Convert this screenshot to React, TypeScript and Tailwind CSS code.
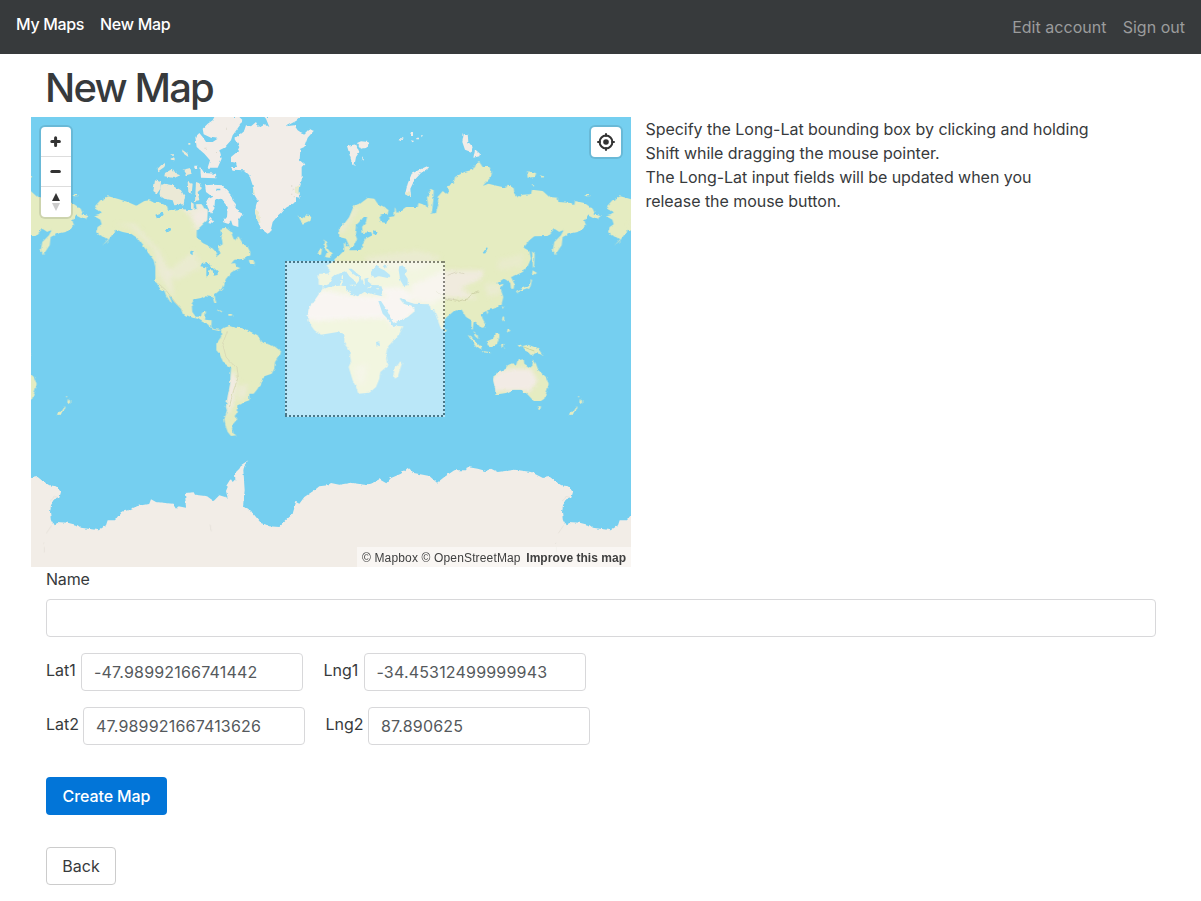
import React from "react";

const EURASIA_AFRICA =
  "M885,447 L905,435 L912,425 L925,415 L935,405 L940,402 L938,375 L943,376 L945,388 L958,388 L955,400 L975,400 L990,398 L995,380 L1003,365 L1025,355 L1020,345 L995,348 L993,330 L1005,315 L1008,300 L995,300 L985,315 L975,325 L972,350 L978,365 L968,388 L955,388 L945,365 L925,360 L924,335 L940,320 L955,300 L965,275 L970,265 L985,262 L1010,243 L1030,245 L1040,260 L1060,270 L1073,280 L1070,290 L1050,292 L1045,300 L1050,315 L1065,318 L1075,300 L1090,298 L1092,270 L1097,288 L1118,275 L1125,270 L1160,270 L1163,258 L1175,262 L1192,272 L1188,240 L1198,215 L1208,220 L1207,250 L1202,290 L1215,288 L1222,260 L1220,240 L1235,222 L1245,230 L1252,225 L1247,205 L1268,200 L1272,180 L1300,165 L1325,158 L1335,140 L1345,135 L1355,150 L1375,150 L1383,165 L1380,180 L1355,207 L1372,200 L1400,207 L1425,212 L1430,203 L1447,207 L1450,230 L1462,242 L1470,233 L1500,232 L1503,218 L1535,222 L1555,240 L1580,242 L1582,255 L1620,258 L1630,265 L1632,252 L1660,258 L1685,275 L1692,290 L1708,294 L1700,308 L1690,305 L1670,295 L1660,310 L1665,325 L1640,345 L1615,350 L1595,360 L1592,385 L1572,415 L1565,400 L1570,375 L1590,355 L1600,335 L1585,345 L1570,335 L1550,357 L1510,358 L1495,370 L1478,392 L1495,402 L1500,425 L1490,448 L1475,465 L1455,475 L1440,480 L1450,500 L1448,515 L1440,515 L1438,498 L1425,488 L1418,485 L1400,497 L1403,505 L1418,500 L1408,515 L1417,540 L1412,560 L1400,570 L1370,580 L1350,590 L1355,605 L1363,620 L1362,630 L1350,633 L1340,622 L1328,615 L1325,638 L1321,636 L1321,610 L1305,600 L1292,578 L1275,577 L1262,588 L1245,602 L1240,612 L1236,638 L1230,636 L1213,590 L1210,580 L1200,578 L1195,562 L1150,560 L1125,552 L1110,542 L1105,545 L1120,563 L1135,565 L1150,575 L1150,583 L1130,600 L1085,618 L1100,627 L1117,628 L1105,650 L1070,690 L1065,710 L1072,745 L1048,765 L1045,785 L1035,810 L1015,827 L982,830 L975,810 L965,790 L953,750 L960,735 L955,700 L940,680 L940,655 L920,645 L870,653 L850,640 L830,612 L833,575 L855,545 L865,530 L875,515 L875,505 L863,503 L863,470 L890,470 L897,460Z";

const NORTH_AMERICA =
  "M190,298 L205,294 L212,285 L202,282 L192,268 L208,250 L232,238 L262,246 L290,255 L316,266 L340,252 L355,250 L370,258 L385,256 L408,268 L412,280 L450,276 L480,280 L498,276 L495,262 L512,262 L520,275 L530,280 L528,310 L497,340 L497,360 L515,378 L540,390 L552,402 L558,418 L565,412 L562,390 L575,382 L572,360 L568,335 L585,333 L600,345 L610,372 L622,358 L636,380 L650,390 L658,405 L658,415 L640,425 L610,428 L600,440 L612,438 L618,450 L628,453 L602,465 L585,485 L572,515 L550,533 L556,558 L550,558 L545,540 L520,538 L510,543 L490,547 L482,560 L484,585 L495,600 L510,597 L513,587 L525,583 L522,608 L542,610 L541,630 L548,637 L568,638 L565,642 L545,638 L530,622 L515,615 L500,605 L485,602 L455,590 L450,575 L430,555 L420,540 L413,533 L422,555 L418,555 L405,535 L400,522 L385,512 L373,490 L373,450 L368,430 L345,398 L330,378 L318,362 L300,350 L275,345 L255,338 L245,352 L232,370 L213,387 L232,366 L205,355 L195,345 L200,330 L212,322 L208,308Z";

const SOUTH_AMERICA =
  "M570,640 L580,632 L595,627 L612,632 L635,633 L660,645 L680,655 L690,675 L730,688 L750,703 L748,712 L732,735 L730,755 L722,770 L700,778 L690,795 L680,815 L668,830 L655,830 L655,850 L640,855 L630,862 L622,865 L620,885 L611,897 L617,908 L607,920 L603,935 L608,950 L617,955 L600,957 L590,945 L583,925 L580,905 L588,880 L585,870 L590,840 L598,800 L600,752 L578,738 L565,710 L556,700 L556,680 L570,660Z";

const AUSTRALIA =
  "M1388,775 L1405,765 L1418,762 L1430,745 L1445,738 L1455,745 L1460,730 L1478,727 L1480,740 L1498,752 L1505,745 L1506,727 L1515,740 L1522,760 L1545,780 L1553,800 L1550,815 L1540,845 L1530,852 L1508,852 L1492,835 L1485,828 L1478,828 L1470,818 L1445,818 L1425,828 L1400,832 L1393,830 L1393,815 L1387,790Z M1521,868 h9 l-2,10 h-6Z";

const ISLANDS = [
  "M654,428 L665,430 L672,442 L655,440Z",
  "M800,295 L812,305 L825,295 L840,300 L835,312 L815,320 L808,312Z",
  "M879,367 L885,375 L890,395 L902,410 L898,422 L882,420 L888,405 L878,390Z",
  "M865,393 L873,397 L870,413 L860,414Z",
  "M1108,733 L1113,738 L1100,780 L1092,785 L1087,770 L1092,750 L1100,745Z",
  "M1488,163 L1515,168 L1513,180 L1490,182Z M1527,174 L1540,180 L1530,182Z M1665,234 h12 v4 h-12Z M1503,202 h7 v3 h-7Z",
  "M1503,403 L1511,410 L1510,445 L1506,450Z",
  "M1500,485 L1503,490 L1498,510 L1480,517 L1462,522 L1460,530 L1455,522 L1475,513 L1490,508 L1498,495Z M1505,460 L1518,468 L1508,475 L1503,470Z",
  "M1413,568 l5,2 l-3,7Z M1415,598 L1420,605 L1418,615 L1413,608Z M1430,635 L1438,640 L1435,648 L1428,645Z M1366,580 l6,5 l-3,8Z",
  "M1310,653 L1325,662 L1340,680 L1352,692 L1350,700 L1335,690 L1322,672Z M1353,702 L1382,706 L1382,709 L1355,706Z",
  "M1368,673 L1385,665 L1395,650 L1405,650 L1405,660 L1398,680 L1385,690 L1370,685Z M1328,642 L1340,655 L1342,667 L1332,658Z M1410,682 L1418,680 L1415,688 L1422,695 L1412,692Z",
  "M1460,680 L1472,685 L1470,690 L1462,688Z M1475,687 L1490,683 L1510,690 L1525,700 L1537,717 L1528,712 L1515,708 L1500,715 L1490,705 L1480,700Z",
  "M1647,846 L1658,855 L1650,862 L1645,856Z M1636,868 L1640,872 L1630,885 L1622,897 L1614,896 L1616,888 L1628,880Z M1641,838 h4 v3 h-4Z",
  "M1241,635 l6,5 l-3,6 l-4,-3Z",
  "M555,575 L572,582 L575,587 L564,581Z M592,591 h11 v5 h-11Z",
];

const GREEN_LAND = [EURASIA_AFRICA, NORTH_AMERICA, SOUTH_AMERICA, AUSTRALIA, ...ISLANDS].join(" ");

const ARCTIC = [
  "M610,65 L640,40 L645,25 L660,28 L675,15 L683,30 L700,20 L715,30 L705,5 L700,0 L810,0 L795,12 L765,28 L790,25 L800,40 L808,45 L820,50 L835,35 L848,42 L830,62 L820,90 L808,95 L806,130 L820,142 L812,150 L812,190 L805,205 L800,215 L806,242 L795,240 L795,255 L765,272 L750,290 L735,303 L725,315 L718,345 L710,350 L690,335 L682,315 L672,285 L675,265 L680,250 L668,230 L665,205 L655,175 L640,160 L605,158 L600,150 L618,150 L615,138 L600,135 L600,120 L618,105 L625,90Z",
  "M550,0 L625,0 L635,10 L630,20 L605,55 L600,70 L580,92 L565,100 L572,125 L560,152 L530,152 L537,130 L520,110 L497,90 L493,60 L505,48 L515,60 L525,75 L545,75 L560,65 L540,62 L518,52 L515,35 L530,20 L545,10Z",
  "M948,87 L975,82 L985,105 L975,120 L970,147 L962,135 L955,110Z M978,78 L990,73 L1013,75 L1010,92 L990,95Z M990,118 L1000,130 L992,130Z",
  "M1102,72 L1118,58 L1115,67Z M1140,45 h6 v12 h-10Z M1140,70 l10,2 l-6,4Z M1156,62 h8 v5 h-8Z M1170,55 l6,0 l-4,6Z",
  "M1190,147 L1194,152 L1170,168 L1150,190 L1138,215 L1140,240 L1122,232 L1130,200 L1142,170 L1165,158Z",
  "M1298,52 L1310,50 L1312,75 L1325,90 L1320,105 L1302,98 L1294,75Z M1332,97 L1347,110 L1345,118 L1327,122Z",
  "M522,205 L545,203 L575,205 L600,235 L605,250 L615,262 L612,278 L635,290 L622,310 L622,330 L605,325 L600,310 L590,320 L575,315 L588,300 L590,270 L570,245 L552,248 L550,275 L540,290 L530,270 L525,250 L545,240 L525,225Z",
  "M508,150 L520,168 L555,170 L556,184 L510,182Z M490,146 h10 v8 h-10Z",
  "M536,300 L550,318 L536,316Z",
].join(" ");

const TUNDRA = [
  "M452,97 L470,110 L472,120 L460,112Z M418,128 L428,122 L432,130Z M380,155 L390,145 L405,137 L400,150 L382,163Z",
  "M402,168 L425,155 L435,170 L448,175 L430,183 L400,178Z M455,158 L478,153 L482,170 L465,175Z",
  "M372,190 L390,195 L388,215 L378,230 L367,222Z M390,205 L400,200 L425,205 L450,220 L462,240 L458,262 L430,265 L425,250 L400,245 L385,235Z",
  "M470,195 L485,200 L482,230 L472,225Z M495,195 L510,200 L512,215 L500,225 L505,250 L492,252Z M480,255 L488,260 L488,280 L480,275Z M419,112 h10 v4 h-10Z M472,78 h6 v5 h-6Z",
].join(" ");

const ANTARCTICA =
  "M0,1083 L20,1080 L35,1092 L55,1105 L75,1108 L90,1125 L85,1142 L70,1148 L60,1165 L57,1185 L60,1210 L68,1225 L75,1222 L77,1215 L110,1217 L140,1225 L150,1232 L203,1240 L225,1225 L230,1210 L252,1210 L270,1185 L290,1180 L320,1167 L355,1160 L360,1147 L375,1155 L425,1160 L435,1175 L442,1168 L465,1172 L462,1128 L488,1126 L492,1133 L528,1138 L548,1152 L565,1135 L590,1142 L585,1122 L590,1110 L585,1108 L598,1087 L605,1098 L613,1090 L612,1068 L625,1055 L632,1043 L652,1030 L640,1045 L637,1060 L641,1120 L636,1168 L665,1188 L690,1218 L715,1228 L745,1230 L760,1215 L785,1190 L795,1155 L805,1160 L820,1140 L850,1120 L865,1108 L890,1105 L900,1098 L925,1103 L960,1097 L1000,1103 L1020,1100 L1045,1087 L1066,1099 L1080,1083 L1110,1070 L1130,1053 L1145,1067 L1195,1077 L1218,1097 L1240,1080 L1270,1060 L1305,1060 L1310,1050 L1340,1055 L1365,1062 L1380,1055 L1400,1065 L1450,1058 L1500,1065 L1536,1083 L1556,1080 L1571,1092 L1580,1100 V1380 H-60 V1060Z";

const INLAND_WATER = [
  "M874,509 L893,502 L903,483 L915,473 L932,467 L945,463 L955,478 L968,488 L976,498 L983,490 L985,484 L968,472 L952,455 L962,455 L985,475 L997,500 L1002,500 L1000,485 L1012,482 L1015,497 L1025,504 L1050,505 L1055,520 L1050,537 L1020,530 L1000,525 L980,538 L962,530 L945,520 L945,507 L925,506 L895,509 L880,515Z",
  "M1020,478 L1020,465 L1030,450 L1035,446 L1050,455 L1060,460 L1078,475 L1070,483 L1045,478 L1030,482Z M1055,447 L1067,443 L1062,455Z",
  "M1103,460 L1105,448 L1118,445 L1128,460 L1120,470 L1130,485 L1130,505 L1118,507 L1108,490Z",
  "M1042,552 L1050,552 L1068,580 L1083,612 L1088,618 L1102,626 L1087,630 L1077,612 L1055,590Z",
  "M1035,675 l10,-2 l2,10 l-10,6Z M1355,408 L1368,390 L1370,395 L1360,410Z",
  "M526,450 L545,450 L560,463 L560,474 L548,476 L545,460 L535,460 L533,478 L526,478Z M508,448 L513,438 L528,435 L540,448 L533,452Z",
  "M373,293 L395,285 L398,293 L385,305 L378,305Z M402,340 L418,334 L420,340 L408,347Z M477,400 L485,403 L485,415 L478,410Z M556,215 h12 v5 h-12Z",
  "M1026,340 l14,4 l-4,9 l-9,-2Z",
].join(" ");

const World = () => (
  <svg viewBox="0 0 1800 1350" className="block h-[450px] w-[600px]">
    <defs>
      <filter id="coast" x="0" y="0" width="1850" height="1350" filterUnits="userSpaceOnUse">
        <feTurbulence type="fractalNoise" baseFrequency="0.07" numOctaves="2" seed="4" />
        <feDisplacementMap in="SourceGraphic" scale="9" xChannelSelector="R" yChannelSelector="G" />
      </filter>
      <filter id="soft" x="0" y="0" width="1850" height="1350" filterUnits="userSpaceOnUse">
        <feGaussianBlur stdDeviation="7" />
      </filter>
      <clipPath id="land">
        <path d={GREEN_LAND} />
      </clipPath>
      <g id="world">
        <g filter="url(#coast)">
          <path d={GREEN_LAND} fill="#e5ecc1" />
          <g clipPath="url(#land)">
            <g filter="url(#soft)" fill="#f2ebe5">
              <path d="M815,607 L830,540 L880,520 L960,535 L1060,540 L1110,550 L1170,570 L1130,605 L1085,630 L1065,604 L960,605 L860,612Z" />
              <path d="M1045,515 L1100,510 L1130,520 L1150,550 L1090,560Z" />
              <path d="M1140,505 L1240,460 L1360,460 L1350,485 L1290,515 L1340,545 L1240,540 L1200,560 L1140,550Z" opacity=".8" />
              <path d="M1380,785 L1405,762 L1440,755 L1500,755 L1520,790 L1500,822 L1380,822Z" />
              <path d="M415,230 L520,250 L600,330 L500,320 L470,290Z" opacity=".7" />
              <path d="M520,270 L560,290 L520,330 L495,345 L480,300Z" opacity=".7" />
              <path d="M250,322 L300,330 L370,400 L380,470 L430,545 L420,470 L385,400 L310,320Z" opacity=".5" />
              <path d="M400,470 L490,400 L510,450 L440,490Z" opacity=".4" />
              <path d="M600,760 L618,780 L608,850 L590,900 L585,850Z" />
              <path d="M620,810 L650,800 L645,840 L620,850Z" opacity=".5" />
              <path d="M970,750 L1010,740 L1000,800 L975,800Z" opacity=".4" />
              <path d="M1000,420 L1160,400 L1230,420 L1160,460 L1020,450Z" opacity=".4" />
              <path d="M1400,430 L1480,410 L1470,450 L1400,460Z" opacity=".3" />
              <path d="M1360,500 L1410,500 L1410,530 L1370,540Z" opacity=".4" />
              <path d="M1700,270 h30 v30 h-30Z M920,340 L975,270 L980,280 L935,350Z" opacity=".5" />
            </g>
            <g fill="none" strokeWidth="3">
              <path d="M1230,532 L1250,548 L1280,553 L1310,545 L1325,530 L1345,525" stroke="#cfd3a8" />
              <path d="M1215,520 L1240,542 L1275,549" stroke="#dcd9c2" />
              <path d="M590,640 L575,680 L585,720 L603,740 L618,752 L622,780 L608,820 L595,870" stroke="#dadbb7" />
              <path d="M383,500 L405,520 L440,565 L455,582" stroke="#d6d9b5" />
              <path d="M1250,475 L1275,465 L1300,470" stroke="#ddd9c4" />
              <path d="M1478,690 L1510,702" stroke="#cbd5a0" />
            </g>
          </g>
          <path d={TUNDRA} fill="#ebe9d6" />
          <path d={ARCTIC} fill="#f2ede8" />
          <path d="M672,275 l12,10 l4,30 l-8,-2 l-8,-25Z M795,210 l10,-5 l-4,30 l-6,-8Z M1122,225 l14,2 l4,12 l-14,-5Z M665,206 l6,20 l2,8 l-6,-6Z" fill="#e7eacb" />
          <path d="M780,205 h4 v4 h-4Z M785,215 h5 v3 h-5Z M778,230 h6 v3 h-6Z M788,238 h4 v3 h-4Z M520,95 h8 v3 h-8Z M552,105 h6 v3 h-6Z M585,35 h6 v3 h-6Z" fill="#dedace" />
          <path d={INLAND_WATER} fill="#75cff0" />
          <path d="M928,490 h7 v13 h-7Z M932,478 h4 v8 h-4Z M958,503 h14 l-3,6Z M1010,511 h12 v2 h-12Z M1036,514 h8 v3 h-8Z" fill="#e5ecc1" />
          <path d={ANTARCTICA} fill="#f2ede7" />
        </g>
        <g fill="none" stroke="#e8e3dc" strokeWidth="3">
          <path d="M57,1152 l8,-6 l4,-8 l10,3 M62,1225 l-8,12 l-8,12 M40,1278 l-4,2 M40,1290 v16 M535,1225 h4 v15 h5" />
        </g>
      </g>
    </defs>
    <rect width="1800" height="1350" fill="#75cff0" />
    <svg x="0" y="0" width="200" height="1000" viewBox="1536 0 200 1000">
      <use href="#world" />
    </svg>
    <use href="#world" />
    <use href="#world" x="1536" />
  </svg>
);

const Field = ({ label, value, labelClass }: { label: string; value: string; labelClass: string }) => (
  <div className="flex items-start">
    <label className={`pt-[5px] whitespace-nowrap ${labelClass}`}>{label}</label>
    <div className="flex h-[38px] w-[222px] items-center rounded border border-[#d8d8da] px-3 tracking-[0.18px] text-[#55595c]">
      {value}
    </div>
  </div>
);

export default function App() {
  return (
    <div className="h-[901px] w-[1201px] overflow-hidden bg-white font-['Inter',sans-serif] text-base leading-6 text-[#373a3c]">
      <nav className="flex h-[54px] justify-between bg-[#373a3c] px-4">
        <div className="flex gap-4 pt-3 font-medium text-white">
          <a className="w-[68px] tracking-[-0.32px] whitespace-nowrap">My Maps</a>
          <a className="tracking-[-0.28px] whitespace-nowrap">New Map</a>
        </div>
        <div className="flex gap-4 pt-[15px] text-[#9b9c9d]">
          <a className="tracking-[0.04px]">Edit account</a>
          <a className="tracking-[0.02px]">Sign out</a>
        </div>
      </nav>

      <main className="pl-[31px]">
        <h1 className="h-[63px] pt-[12px] pl-[14px] text-[40px] leading-[44px] font-medium tracking-[-1.85px]">New Map</h1>

        <div className="flex">
          <div className="relative h-[450px] w-[600px] overflow-hidden">
            <World />
            <svg className="absolute top-[144px] left-[254px] h-[156px] w-[160px] opacity-50" viewBox="0 0 160 156" shapeRendering="crispEdges">
              <rect width="160" height="156" fill="#fff" />
              <path d="M0,1 H160 M0,155 H160 M1,0 V156 M159,0 V156" stroke="#202020" strokeWidth="2" strokeDasharray="2 2" />
            </svg>

            <div className="absolute top-[10px] left-[10px] w-[30px] divide-y divide-[#ddd] rounded bg-white shadow-[0_0_0_2px_rgba(0,0,0,0.1)]">
              <div className="flex h-[30px] items-center justify-center">
                <svg viewBox="0 0 20 20" className="h-5 w-5">
                  <path d="M9.6,5.7 V13.4 M5.8,9.5 H13.4" stroke="#333" strokeWidth="3" strokeLinecap="round" />
                </svg>
              </div>
              <div className="flex h-[30px] items-center justify-center">
                <svg viewBox="0 0 20 20" className="h-5 w-5">
                  <path d="M5.8,9.5 H13.4" stroke="#333" strokeWidth="3" strokeLinecap="round" />
                </svg>
              </div>
              <div className="flex h-[30px] items-center justify-center">
                <svg viewBox="0 0 20 20" className="h-5 w-5">
                  <path d="M6,9 L10,1 L14,9Z" fill="#333" />
                  <path d="M6,11 L10,19 L14,11Z" fill="#ccc" />
                </svg>
              </div>
            </div>

            <div className="absolute top-[10px] right-[10px] flex h-[30px] w-[30px] items-center justify-center rounded bg-white shadow-[0_0_0_2px_rgba(0,0,0,0.1)]">
              <svg viewBox="0 0 20 20" className="h-5 w-5" fill="none" stroke="#333" strokeWidth="2">
                <circle cx="10" cy="10" r="6.4" />
                <circle cx="10" cy="10" r="2.8" fill="#333" stroke="none" />
                <path d="M10,2 V4 M10,16 V18 M2,10 H4 M16,10 H18" strokeLinecap="round" />
              </svg>
            </div>

            <div className="absolute right-0 bottom-0 flex h-5 w-[274px] items-center justify-between bg-white/50 px-[5px] pt-[2px] font-['Liberation_Sans',Arial,sans-serif] text-[12px] leading-5 whitespace-nowrap text-[#404040]">
              <span className="tracking-[0.15px]">© Mapbox © OpenStreetMap</span>
              <span className="font-bold tracking-[0.02px]">Improve this map</span>
            </div>
          </div>

          <p className="w-[470px] pl-[14.5px] tracking-[-0.04px] whitespace-nowrap">
            Specify the Long-Lat bounding box by clicking and holding
            <br />
            Shift while dragging the mouse pointer.
            <br />
            The Long-Lat input fields will be updated when you
            <br />
            release the mouse button.
          </p>
        </div>

        <form className="pr-[45px] pl-[15px]">
          <label className="block h-8 tracking-[-0.2px]">Name</label>
          <div className="h-[38px] rounded border border-[#d8d8da]" />
          <div className="mt-4 flex">
            <Field label="Lat1" value="-47.98992166741442" labelClass="w-[35px]" />
            <div className="w-[20.5px]" />
            <Field label="Lng1" value="-34.45312499999943" labelClass="w-[40px]" />
          </div>
          <div className="mt-4 flex">
            <Field label="Lat2" value="47.989921667413626" labelClass="w-[37px]" />
            <div className="w-[20.5px]" />
            <Field label="Lng2" value="87.890625" labelClass="w-[42.5px]" />
          </div>
          <div className="mt-8 flex h-[38px] w-[121px] items-center justify-center rounded bg-[#0275d8] font-medium tracking-[-0.1px] whitespace-nowrap text-white">
            Create Map
          </div>
          <div className="mt-8 flex h-[38px] w-[70px] items-center justify-center rounded border border-[#ccc]">Back</div>
        </form>
      </main>
    </div>
  );
}
